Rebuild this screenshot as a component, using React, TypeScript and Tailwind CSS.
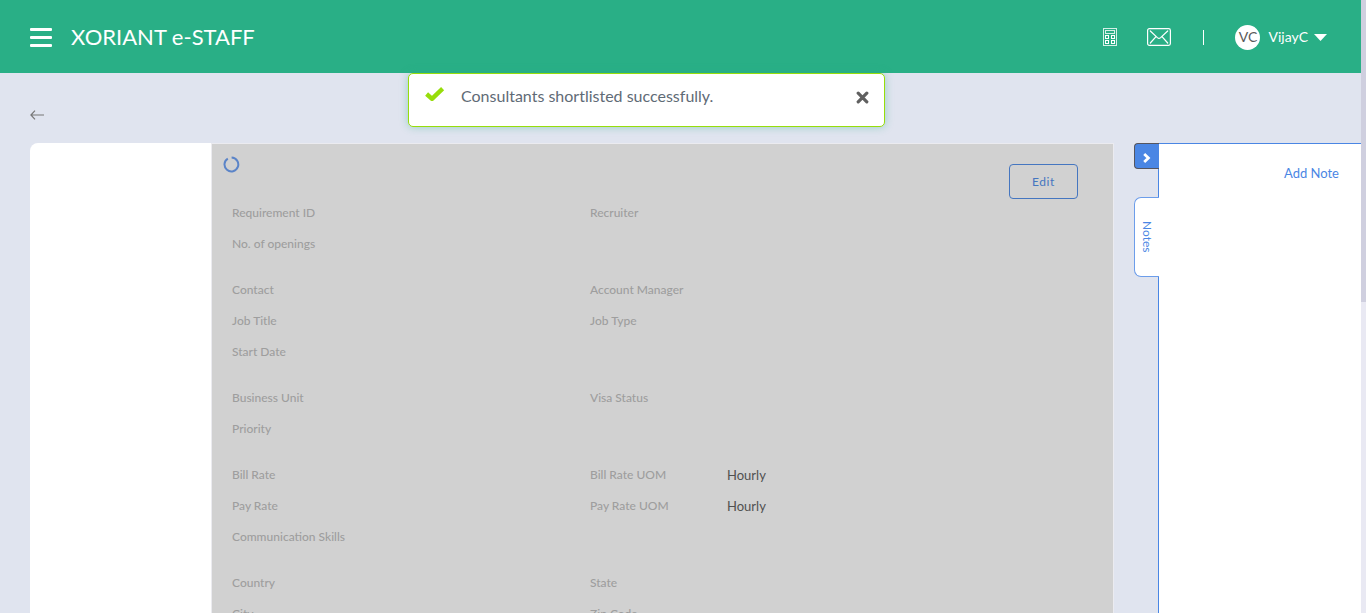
import { Fragment } from 'react';

type Field = { label: string; value?: string };
type Row = [Field, Field?];

const groups: Row[][] = [
  [
    [{ label: 'Requirement ID' }, { label: 'Recruiter' }],
    [{ label: 'No. of openings' }],
  ],
  [
    [{ label: 'Contact' }, { label: 'Account Manager' }],
    [{ label: 'Job Title' }, { label: 'Job Type' }],
    [{ label: 'Start Date' }],
  ],
  [
    [{ label: 'Business Unit' }, { label: 'Visa Status' }],
    [{ label: 'Priority' }],
  ],
  [
    [{ label: 'Bill Rate' }, { label: 'Bill Rate UOM', value: 'Hourly' }],
    [{ label: 'Pay Rate' }, { label: 'Pay Rate UOM', value: 'Hourly' }],
    [{ label: 'Communication Skills' }],
  ],
  [
    [{ label: 'Country' }, { label: 'State' }],
    [{ label: 'City' }, { label: 'Zip Code' }],
  ],
];

function FieldCell({ field }: { field?: Field }) {
  if (!field) return <div />;
  return (
    <div className="flex">
      <dt className="w-[137px] shrink-0 whitespace-nowrap text-xs font-medium leading-5 text-[#9e9e9e]">
        {field.label}
      </dt>
      <dd className="text-[13px] leading-5 text-[#505050]">{field.value}</dd>
    </div>
  );
}

function CalculatorIcon() {
  return (
    <svg width="14" height="18" viewBox="0 0 14 18" fill="none" stroke="white" strokeWidth="1" aria-hidden="true">
      <rect x="0.5" y="0.5" width="13" height="17" strokeOpacity="0.8" />
      <rect x="2.5" y="2.5" width="9" height="3" strokeOpacity="0.8" />
      <rect x="2.5" y="7.5" width="3" height="3" />
      <rect x="8.5" y="7.5" width="3" height="3" />
      <rect x="2.5" y="12.5" width="3" height="3" />
      <rect x="8.5" y="12.5" width="3" height="3" />
    </svg>
  );
}

function MailIcon() {
  return (
    <svg width="24" height="18" viewBox="0 0 24 18" fill="none" stroke="white" strokeWidth="1.2" strokeLinecap="round" aria-hidden="true">
      <rect x="0.6" y="0.6" width="22.8" height="16.8" rx="1.8" />
      <path d="M3.3 3 10.4 9.6Q12 11 13.6 9.6L20.7 3M3.3 15 9 8.6M20.7 15 15 8.6" />
    </svg>
  );
}

function Header() {
  return (
    <header className="flex h-[73px] shrink-0 items-center bg-[#29af86] pl-[30px] pr-[34px] text-white">
      <button type="button" aria-label="Menu" className="mt-0.5 flex w-[22px] flex-col gap-[5px]">
        <span className="h-[3px] w-full rounded-[1px] bg-white" />
        <span className="h-[3px] w-full rounded-[1px] bg-white" />
        <span className="h-[3px] w-full rounded-[1px] bg-white" />
      </button>
      <h1 className="ml-[19px] text-[22px] font-normal leading-7">XORIANT e-STAFF</h1>
      <div className="ml-auto mt-0.5 flex items-center">
        <button type="button" aria-label="Calculator" className="pb-px">
          <CalculatorIcon />
        </button>
        <button type="button" aria-label="Mail" className="ml-[30px] pb-px">
          <MailIcon />
        </button>
        <span className="ml-8 h-[15px] w-px bg-white" />
        <button type="button" className="ml-[31px] flex items-center text-sm leading-5">
          <span className="flex size-[25px] items-center justify-center rounded-full bg-white pb-0.5 text-[#5a5a5a]">VC</span>
          <span className="ml-2 pb-0.5">VijayC</span>
          <svg className="ml-1.5" width="13" height="7" viewBox="0 0 13 7" fill="white" aria-hidden="true">
            <path d="M0 0H13L6.5 7Z" />
          </svg>
        </button>
      </div>
    </header>
  );
}

function Toast() {
  return (
    <div
      role="status"
      className="absolute left-[408px] top-[73px] flex h-[54px] w-[477px] items-start rounded-[5px] border border-[#97dd0b] bg-white pl-[15px] pr-[15px] pt-2.5 shadow-[0_0_8px_rgba(41,175,134,0.4)]"
    >
      <svg className="mt-0.5" width="21" height="16" viewBox="0 0 21 16" aria-hidden="true">
        <path d="M2.6 8 8 12.8 18.6 2.6" fill="none" stroke="#97dd0b" strokeWidth="4.4" strokeLinejoin="round" />
      </svg>
      <p className="ml-4 text-base leading-6 text-[#5f6b76]">Consultants shortlisted successfully.</p>
      <button type="button" aria-label="Close" className="ml-auto mt-[7px]">
        <svg width="13" height="13" viewBox="0 0 13 13" fill="none" stroke="#606060" strokeWidth="3.2" strokeLinecap="round" aria-hidden="true">
          <path d="M2.2 2.2 10.8 10.8M10.8 2.2 2.2 10.8" />
        </svg>
      </button>
    </div>
  );
}

function Details() {
  return (
    <section className="min-w-0 flex-1 border border-b-0 border-[#ebebf0] bg-[#d1d1d1]">
      <div className="flex h-[59px] items-start justify-between pl-[11px] pr-[35px]">
        <svg className="mt-3" width="17" height="17" viewBox="0 0 17 17" fill="none" stroke="#5b84c8" strokeWidth="2" role="img" aria-label="Loading">
          <path d="M8.6 1.6A6.9 6.9 0 1 1 4.8 2.6" />
        </svg>
        <button type="button" className="mt-5 h-[35px] w-[69px] rounded border border-[#4576c0] text-xs tracking-wider text-[#4576c0]">
          Edit
        </button>
      </div>
      <dl className="flex flex-col gap-[26px] pl-5">
        {groups.map((rows, g) => (
          <div key={g} className="grid grid-cols-[358px_1fr] gap-y-[11px]">
            {rows.map(([first, second]) => (
              <Fragment key={first.label}>
                <FieldCell field={first} />
                <FieldCell field={second} />
              </Fragment>
            ))}
          </div>
        ))}
      </dl>
    </section>
  );
}

function NotesPanel() {
  return (
    <aside className="flex">
      <div className="z-10 -mr-px flex w-[25px] flex-col">
        <button
          type="button"
          aria-label="Collapse notes"
          className="flex h-[26px] items-center justify-center rounded-l border border-r-0 border-[#55555f] bg-[#4a86e4] pt-1"
        >
          <svg width="8" height="10" viewBox="0 0 8 10" fill="none" stroke="white" strokeWidth="2.8" aria-hidden="true">
            <path d="M1.2 1 5.4 5 1.2 9" />
          </svg>
        </button>
        <button
          type="button"
          className="mt-7 flex h-20 items-center justify-center rounded-l-[7px] border border-r-0 border-[#6c9dea] bg-white text-xs text-[#4a86e4]"
        >
          <span className="[writing-mode:vertical-rl]">Notes</span>
        </button>
      </div>
      <div className="flex w-[203px] items-start justify-end border-l border-t border-[#4a86e4] bg-white pr-[22px] pt-[19px]">
        <a href="#add-note" className="text-[13px] leading-5 text-[#4a86e4]">
          Add Note
        </a>
      </div>
    </aside>
  );
}

export default function App() {
  return (
    <div className="relative flex h-screen overflow-hidden bg-[#e0e4ef] font-['Lato',sans-serif]">
      <div className="flex min-w-0 flex-1 flex-col">
        <Header />
        <div className="flex h-[70px] shrink-0 items-center pl-[30px] pt-3.5">
          <a href="#back" aria-label="Back">
            <svg width="14" height="10" viewBox="0 0 14 10" fill="none" stroke="#777" strokeWidth="1.2" aria-hidden="true">
              <path d="M5 0.7 0.9 5 5 9.3M1 5H14" />
            </svg>
          </a>
        </div>
        <main className="flex min-h-0 flex-1">
          <div className="ml-[30px] w-[181px] shrink-0 rounded-tl-lg bg-white" />
          <Details />
          <div className="w-5 shrink-0" />
          <NotesPanel />
        </main>
      </div>
      <div className="w-[5px] shrink-0 bg-[#e9e9f3]">
        <div className="h-[302px] bg-[#cfcfdf]" />
      </div>
      <Toast />
    </div>
  );
}
